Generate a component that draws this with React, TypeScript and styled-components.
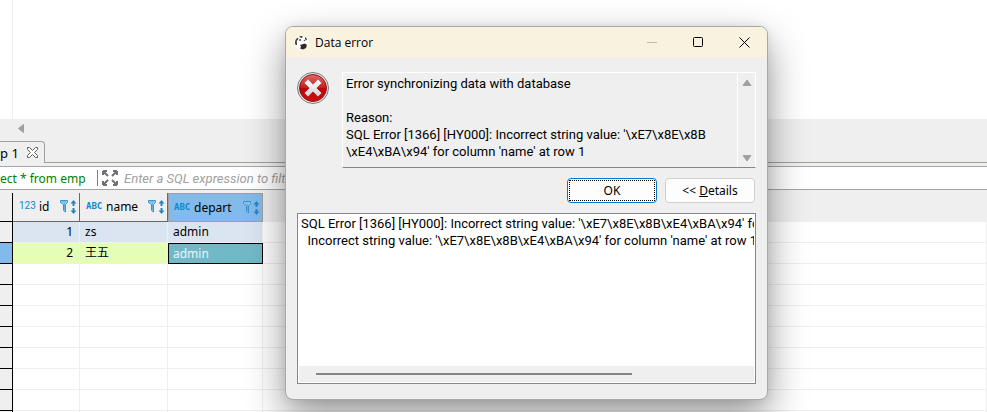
import React from 'react';
import styled, { createGlobalStyle, css } from 'styled-components';

const GlobalStyle = createGlobalStyle`
  * { box-sizing: border-box; }
  html, body { margin: 0; }
  body, button, input {
    font-family: "Noto Sans", "Noto Sans CJK SC", sans-serif;
    font-size: 12px;
    color: #000;
  }
`;

const Workbench = styled.main`
  position: relative;
  height: 100vh;
  min-height: 400px;
  display: flex;
  flex-direction: column;
  overflow: hidden;
  background: #efefef;
`;

const Editor = styled.section`
  flex: none;
  height: 119px;
  padding-left: 12px;
  background: #fff;
`;

const EditorPage = styled.div`
  height: 100%;
  border-left: 1px solid #efefef;
`;

const EditorScroll = styled.div`
  flex: none;
  display: flex;
  align-items: center;
  height: 18px;
  padding-left: 17px;
`;

const TabStrip = styled.div`
  flex: none;
  display: flex;
  height: 26px;
  padding-top: 4px;
  border-bottom: 1px solid #a0a0a0;
`;

const Tab = styled.div`
  display: flex;
  align-items: center;
  gap: 8px;
  height: 22px;
  padding-right: 6px;
  border: 1px solid #a0a0a0;
  border-width: 1px 1px 0 0;
  border-radius: 0 4px 0 0;
  background: #efefef;
  font-size: 13px;
`;

const IconButton = styled.button`
  display: flex;
  padding: 0;
  border: 0;
  background: none;
`;

const FilterBar = styled.div`
  flex: none;
  display: flex;
  align-items: center;
  height: 24px;
  margin-top: 3px;
  border-top: 1px solid #a5a5ad;
  border-bottom: 1px solid #a5a5a5;
  background: #fff;
`;

const Query = styled.span`
  width: 97px;
  color: #008000;
  white-space: nowrap;
`;

const ExpandButton = styled(IconButton)`
  height: 16px;
  padding: 0 6px 0 4px;
  border-left: 1px solid #808080;
`;

const FilterInput = styled.input`
  flex: 1;
  min-width: 0;
  padding: 0;
  border: 0;
  outline: 0;
  font-family: Roboto, sans-serif;
  font-size: 13px;
  font-style: italic;
  &::placeholder { color: #a0a0a0; opacity: 1; }
`;

const Grid = styled.table`
  flex: none;
  width: 100%;
  margin-top: 3px;
  table-layout: fixed;
  border-collapse: separate;
  border-spacing: 0;
  background: #fff;
`;

const Col = styled.col<{ $w?: number }>`
  width: ${p => (p.$w ? `${p.$w}px` : 'auto')};
`;

const HeadCell = styled.th<{ $selected?: boolean; $filler?: boolean }>`
  height: 29px;
  padding: 0 2px 0 6px;
  font-weight: 400;
  text-align: left;
  background: #efefef;
  border-right: 1px solid #696969;
  border-bottom: 1px solid #696969;
  ${p => p.$selected && css`
    padding: 0 2px 0 5px;
    background: #82baeb;
    border: 1px solid #a0a0a0;
  `}
  ${p => p.$filler && css`border-color: #efefef;`}
`;

const HeadContent = styled.div`
  display: flex;
  align-items: center;
  gap: 4px;
`;

const HeadLabel = styled.span`
  flex: 1;
  line-height: 20px;
`;

const TypeMark = styled.span<{ $numeric?: boolean }>`
  color: #0a8bd0;
  width: 16px;
  line-height: 12px;
  margin-bottom: 2px;
  ${p => p.$numeric
    ? css`font-family: Roboto, sans-serif; font-size: 10px;`
    : css`font-family: "DejaVu Sans Mono", monospace; font-size: 9px; font-weight: 700;`}
`;

const RowHead = styled.th<{ $current?: boolean }>`
  height: 21px;
  padding: 0;
  background: ${p => (p.$current ? '#82baeb' : '#efefef')};
  border-right: 1px solid #000;
  border-bottom: 1px solid #000;
`;

const CornerHead = styled(RowHead)`
  height: 29px;
`;

type Tone = 'plain' | 'striped' | 'edited' | 'active';

const tones = {
  plain: css`background: #fff;`,
  striped: css`background: #dbe5f1;`,
  edited: css`background: #e4ffb5;`,
  active: css`
    padding: 0 4px;
    color: #e8f6fa;
    background: #72b9c8;
    border: 1px solid #000;
  `,
};

const Cell = styled.td<{ $tone?: Tone; $right?: boolean }>`
  height: 21px;
  padding: 0 6px 0 5px;
  line-height: 18px;
  text-align: ${p => (p.$right ? 'right' : 'left')};
  border-right: 1px solid #efefef;
  border-bottom: 1px solid #efefef;
  ${p => tones[p.$tone ?? 'plain']}
`;

const Dialog = styled.div`
  position: absolute;
  top: 26px;
  left: 285px;
  width: 483px;
  display: flex;
  flex-direction: column;
  overflow: hidden;
  border: 1px solid #a8a8a8;
  border-radius: 8px;
  background: #efefef;
  box-shadow: 0 16px 38px rgba(0, 0, 0, 0.42), 0 0 10px rgba(0, 0, 0, 0.08);
`;

const TitleBar = styled.header`
  display: flex;
  align-items: center;
  height: 30px;
  padding-left: 8px;
  background: #f8f2df;
`;

const Title = styled.h1`
  flex: 1;
  margin: 0 0 0 6px;
  font-family: "Open Sans", sans-serif;
  font-size: 12px;
  font-weight: 400;
`;

const WindowButton = styled(IconButton)`
  width: 46px;
  height: 29px;
  align-items: center;
  justify-content: center;
`;

const DialogBody = styled.div`
  padding: 15px 11px;
`;

const MessageRow = styled.div`
  display: flex;
  align-items: flex-start;
  gap: 13px;
`;

const MessageBox = styled.div`
  flex: 1;
  display: flex;
  height: 96px;
  border: 1px solid #fff;
  border-bottom-color: #868686;
`;

const Message = styled.p`
  flex: 1;
  margin: 0;
  padding: 2px 3px;
  font-family: Roboto, sans-serif;
  font-size: 13px;
  line-height: 17px;
  white-space: pre;
`;

const VScroll = styled.div`
  display: flex;
  flex-direction: column;
  justify-content: space-between;
  align-items: center;
  width: 18px;
  padding: 6px 0 5px;
  border-left: 1px solid #fff;
`;

const Actions = styled.div`
  display: flex;
  justify-content: flex-end;
  gap: 8px;
  margin-top: 10px;
  padding-right: 1px;
`;

const PushButton = styled.button<{ $primary?: boolean }>`
  width: 90px;
  height: 25px;
  padding: 1px;
  border: 1px solid ${p => (p.$primary ? '#0078d4' : '#d0d0d0')};
  border-radius: 4px;
  background: #fdfdfd;
`;

const FocusRing = styled.span`
  display: flex;
  align-items: center;
  justify-content: center;
  height: 100%;
  border: 1px dotted #000;
`;

const Details = styled.div`
  display: flex;
  flex-direction: column;
  justify-content: space-between;
  height: 171px;
  margin-top: 10px;
  padding: 1px;
  border: 1px solid #828790;
  background: #fff;
`;

const DetailList = styled.ul`
  margin: 0;
  padding: 0 0 0 2px;
  overflow: hidden;
  list-style: none;
  font-family: Roboto, sans-serif;
  font-size: 13px;
  line-height: 17px;
  white-space: pre;
`;

const HScroll = styled.div`
  display: flex;
  align-items: center;
  height: 16px;
  padding: 0 17px;
  background: #efefef;
`;

const HThumb = styled.div`
  width: 75%;
  height: 2px;
  background: #858585;
`;

const Arrow = ({ d, w = 10, h = 8 }: { d: string; w?: number; h?: number }) => (
  <svg width={w} height={h} viewBox={`0 0 ${w} ${h}`} aria-hidden="true">
    <path d={d} fill="#a0a0a0" stroke="#a0a0a0" strokeLinejoin="round" />
  </svg>
);

const SortFilterIcon = () => (
  <svg width="17" height="16" viewBox="0 0 17 16" aria-hidden="true">
    <path d="M.5 1.500h7v2l-2 2v7.500l-2 -1.500v-6l-3-2z" fill="#a5cfee" stroke="#3a92cc" />
    <path d="M2 3h4M4.500 4v7" stroke="#63aee0" />
    <path d="M13.500 3v4M13.500 9v4" stroke="#2588c6" strokeWidth="2" />
    <path d="M10.500 4.500 13.500 1l3 3.500zM10.500 11.500l3 3.500 3-3.500z" fill="#2588c6" />
  </svg>
);

const ExpandIcon = () => (
  <svg width="16" height="16" viewBox="0 0 16 16" aria-hidden="true">
    <path d="M1 1h4M1 1v4M1 1l5 5M15 1h-4M15 1v4M15 1l-5 5M1 15h4M1 15v-4M1 15l5-5M15 15h-4M15 15v-4M15 15l-5-5" fill="none" stroke="#707070" strokeWidth="2" />
  </svg>
);

const TabCloseIcon = () => (
  <svg width="11" height="11" viewBox="0 0 11 11" aria-hidden="true">
    <path d="M.5.5h2l3 3 3-3h2v2l-3 3 3 3v2h-2l-3-3-3 3h-2v-2l3-3-3-3z" fill="#fff" stroke="#606060" />
  </svg>
);

const BeaverIcon = () => (
  <svg width="15" height="15" viewBox="0 0 15 15" aria-hidden="true">
    <circle cx="7.500" cy="7.500" r="7" fill="#fff" />
    <path d="M1 8C1 5 2 3 4.500 2.500L4 4.500 2.800 6l.2 4H1.500z" fill="#4a4042" />
    <path d="M5 1.500 8 1l1 1-2 1zM11 2l2 2-.5 1.500L11 4z" fill="#3a3032" />
    <circle cx="6" cy="5" r="1" fill="#5a5052" />
    <circle cx="10.500" cy="5.500" r=".8" fill="#5a5052" />
    <path d="M6 10 11 8.500l2 1.500-1 3-3 1.500-3-1 1-2z" fill="#33292b" />
  </svg>
);

const ErrorIcon = () => (
  <svg width="32" height="32" viewBox="0 0 32 32" role="img" aria-label="Error">
    <defs>
      <linearGradient id="red" x1="0" y1="0" x2="0" y2="1">
        <stop offset="0" stopColor="#e06a6a" />
        <stop offset=".5" stopColor="#c81a1c" />
        <stop offset=".52" stopColor="#b80608" />
        <stop offset="1" stopColor="#d01012" />
      </linearGradient>
      <linearGradient id="cross" x1="0" y1="0" x2="0" y2="1">
        <stop offset="0" stopColor="#fff" />
        <stop offset="1" stopColor="#d4d4d4" />
      </linearGradient>
    </defs>
    <circle cx="16" cy="16" r="15.500" fill="#e8e8e8" stroke="#7c7c7c" />
    <circle cx="16" cy="16" r="13.500" fill="url(#red)" stroke="#8f1a1a" />
    <path d="m11 7.500 5 5 5-5 3.500 3.500-5 5 5 5-3.500 3.500-5-5-5 5L7.500 21l5-5-5-5z" fill="url(#cross)" />
  </svg>
);

const columns = [
  { name: 'id', numeric: true },
  { name: 'name' },
  { name: 'depart', selected: true },
];

const rows: { cells: string[]; tones: Tone[]; current?: boolean }[] = [
  { cells: ['1', 'zs', 'admin'], tones: ['striped', 'striped', 'striped'] },
  { cells: ['2', '王五', 'admin'], tones: ['edited', 'edited', 'active'], current: true },
  ...Array.from({ length: 8 }, () => ({ cells: ['', '', ''], tones: ['plain', 'plain', 'plain'] as Tone[] })),
];

const message = `Error synchronizing data with database

Reason:
SQL Error [1366] [HY000]: Incorrect string value: '\\xE7\\x8E\\x8B
\\xE4\\xBA\\x94' for column 'name' at row 1`;

const details = [
  "SQL Error [1366] [HY000]: Incorrect string value: '\\xE7\\x8E\\x8B\\xE4\\xBA\\x94' for column 'name' at row 1",
  "  Incorrect string value: '\\xE7\\x8E\\x8B\\xE4\\xBA\\x94' for column 'name' at row 1",
];

export default function App() {
  return (
    <>
      <GlobalStyle />
      <Workbench>
        <Editor><EditorPage /></Editor>
        <EditorScroll><Arrow d="M6.500.500v8l-5-4z" w={8} h={9} /></EditorScroll>
        <TabStrip>
          <Tab>
            <span>p 1</span>
            <IconButton aria-label="Close tab"><TabCloseIcon /></IconButton>
          </Tab>
        </TabStrip>
        <FilterBar>
          <Query>ect * from emp</Query>
          <ExpandButton aria-label="Expand filter"><ExpandIcon /></ExpandButton>
          <FilterInput aria-label="Filter" placeholder="Enter a SQL expression to filter results" />
        </FilterBar>
        <Grid>
          <colgroup>
            <Col $w={13} /><Col $w={67} /><Col $w={88} /><Col $w={95} /><Col />
          </colgroup>
          <thead>
            <tr>
              <CornerHead />
              {columns.map(c => (
                <HeadCell key={c.name} $selected={c.selected}>
                  <HeadContent>
                    <TypeMark $numeric={c.numeric}>{c.numeric ? '123' : 'ABC'}</TypeMark>
                    <HeadLabel>{c.name}</HeadLabel>
                    <SortFilterIcon />
                  </HeadContent>
                </HeadCell>
              ))}
              <HeadCell $filler />
            </tr>
          </thead>
          <tbody>
            {rows.map((row, r) => (
              <tr key={r}>
                <RowHead $current={row.current} />
                {row.cells.map((text, i) => (
                  <Cell key={i} $tone={row.tones[i]} $right={i === 0}>{text}</Cell>
                ))}
                <Cell />
              </tr>
            ))}
          </tbody>
        </Grid>

        <Dialog role="dialog" aria-label="Data error">
          <TitleBar>
            <BeaverIcon />
            <Title>Data error</Title>
            <WindowButton aria-label="Minimize" disabled>
              <svg width="10" height="10"><path d="M0 5.500h10" stroke="#bdb9ac" /></svg>
            </WindowButton>
            <WindowButton aria-label="Maximize">
              <svg width="10" height="10"><rect x=".5" y=".5" width="9" height="9" rx="1" fill="none" stroke="#000" /></svg>
            </WindowButton>
            <WindowButton aria-label="Close">
              <svg width="11" height="11"><path d="m.5.5 10 10m0-10-10 10" stroke="#000" /></svg>
            </WindowButton>
          </TitleBar>
          <DialogBody>
            <MessageRow>
              <ErrorIcon />
              <MessageBox>
                <Message>{message}</Message>
                <VScroll>
                  <Arrow d="M1 6.500 5 1l4 5.500z" />
                  <Arrow d="M1 1.500 5 7l4-5.500z" />
                </VScroll>
              </MessageBox>
            </MessageRow>
            <Actions>
              <PushButton $primary><FocusRing>OK</FocusRing></PushButton>
              <PushButton>&lt;&lt; <u>D</u>etails</PushButton>
            </Actions>
            <Details>
              <DetailList>
                {details.map(line => <li key={line}>{line}</li>)}
              </DetailList>
              <HScroll><HThumb /></HScroll>
            </Details>
          </DialogBody>
        </Dialog>
      </Workbench>
    </>
  );
}
